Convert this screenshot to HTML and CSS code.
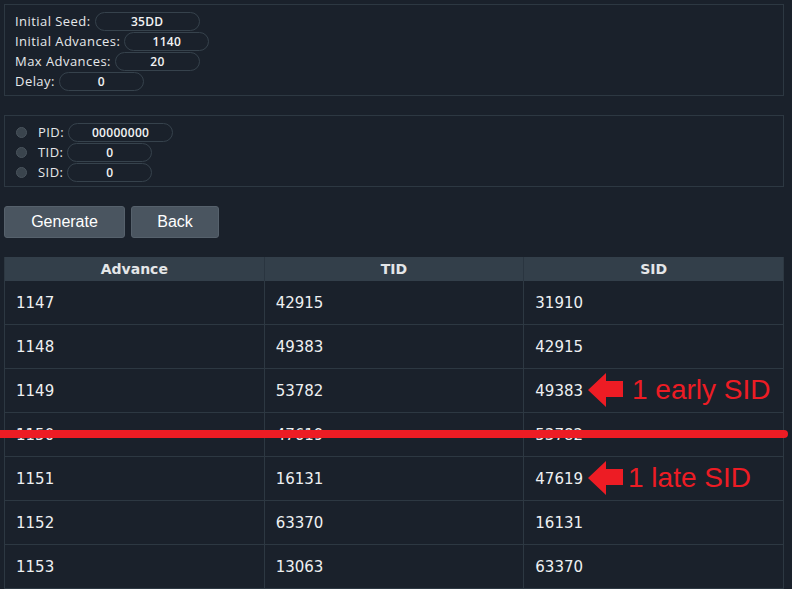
FILE: index.html
```html
<!DOCTYPE html>
<html>
<head>
<meta charset="utf-8">
<link rel="stylesheet" href="styles.css">
</head>
<body>
<div class="page">
  <section class="panel panel-settings">
    <div class="field"><span class="label">Initial Seed:</span><span class="input wide">35DD</span></div>
    <div class="field"><span class="label">Initial Advances:</span><span class="input">1140</span></div>
    <div class="field"><span class="label">Max Advances:</span><span class="input">20</span></div>
    <div class="field"><span class="label">Delay:</span><span class="input">0</span></div>
  </section>
  <section class="panel panel-filter">
    <div class="field"><span class="radio"></span><span class="label">PID:</span><span class="input wide">00000000</span></div>
    <div class="field"><span class="radio"></span><span class="label">TID:</span><span class="input">0</span></div>
    <div class="field"><span class="radio"></span><span class="label">SID:</span><span class="input">0</span></div>
  </section>
  <div class="buttons">
    <button class="btn btn-generate">Generate</button>
    <button class="btn btn-back">Back</button>
  </div>
  <table class="results">
    <thead>
      <tr><th>Advance</th><th>TID</th><th>SID</th></tr>
    </thead>
    <tbody>
      <tr><td>1147</td><td>42915</td><td>31910</td></tr>
      <tr><td>1148</td><td>49383</td><td>42915</td></tr>
      <tr><td>1149</td><td>53782</td><td>49383</td></tr>
      <tr><td>1150</td><td>47619</td><td>53782</td></tr>
      <tr><td>1151</td><td>16131</td><td>47619</td></tr>
      <tr><td>1152</td><td>63370</td><td>16131</td></tr>
      <tr><td>1153</td><td>13063</td><td>63370</td></tr>
    </tbody>
  </table>
</div>
<div class="strike"></div>
<div class="note note-early">
  <svg class="arrow" width="36" height="36" viewBox="0 0 36 36"><polygon points="0,18 18,1 18,9 35,9 35,25 18,25 18,35" fill="#ed1c24"/></svg>
  <span class="note-text">1 early SID</span>
</div>
<div class="note note-late">
  <svg class="arrow" width="36" height="36" viewBox="0 0 36 36"><polygon points="0,18 18,1 18,9 35,9 35,25 18,25 18,35" fill="#ed1c24"/></svg>
  <span class="note-text">1 late SID</span>
</div>
</body>
</html>
```
FILE: styles.css
```css
html, body {
  margin: 0;
  padding: 0;
  background: #1a212b;
  width: 792px;
  height: 589px;
  overflow: hidden;
}
body {
  font-family: "Open Sans", "DejaVu Sans", sans-serif;
  color: #e6e8ea;
  position: relative;
}
.page {
  padding: 4px 8px 0 4px;
  display: flex;
  flex-direction: column;
}
.panel {
  border: 1px solid #2d3842;
  display: flex;
  flex-direction: column;
  box-sizing: border-box;
}
.panel-settings {
  height: 92px;
  padding: 6px 10px 0 10px;
}
.panel-filter {
  margin-top: 19px;
  height: 72px;
  padding: 6px 10px 0 11px;
}
.field {
  display: flex;
  align-items: center;
  height: 20px;
  gap: 4px;
}
.label {
  font-size: 13px;
  letter-spacing: 0.45px;
  color: #e6e8ea;
}
.input {
  box-sizing: border-box;
  width: 85px;
  height: 19px;
  border: 1px solid #36424c;
  border-radius: 10px;
  text-align: center;
  font-size: 12px;
  font-weight: 600;
  letter-spacing: 0.3px;
  line-height: 17px;
  color: #f2f3f4;
}
.input.wide { width: 105px; }
.panel-filter .label { margin-left: 7px; }
.radio {
  width: 11px;
  height: 11px;
  border-radius: 50%;
  background: #3a444d;
  border: 1px solid #4a545d;
  box-sizing: border-box;
}
.buttons {
  margin-top: 19px;
  display: flex;
  gap: 6px;
}
.btn {
  font-family: "Liberation Sans", Arial, sans-serif;
  font-size: 16px;
  color: #ffffff;
  background: #4a5560;
  border: 1px solid #56616c;
  border-radius: 3px;
  height: 32px;
  padding: 0;
}
.btn-generate { width: 121px; }
.btn-back { width: 88px; }
.results {
  margin-top: 19px;
  width: 780px;
  border-collapse: collapse;
  table-layout: fixed;
  border-right: 1px solid #2d3842;
  border-left: 1px solid #2d3842;
  font-family: "DejaVu Sans", sans-serif;
}
.results th {
  background: #333f4a;
  height: 23px;
  padding: 0 0 1px 0;
  font-size: 14px;
  font-weight: 700;
  color: #e4e6e8;
  border-left: 1px solid #2a3540;
}
.results th:first-child { border-left: none; }
.results td {
  height: 43px;
  line-height: 18px;
  padding: 0 0 0 11px;
  font-size: 15px;
  color: #eef0f2;
  border-bottom: 1px solid #2d3842;
  border-left: 1px solid #2d3842;
}
.strike {
  position: absolute;
  left: 0;
  top: 430px;
  width: 788px;
  height: 8px;
  background: #ed1c24;
  border-radius: 0 4px 4px 0;
}
.note {
  position: absolute;
  left: 588px;
  display: flex;
  align-items: center;
  gap: 8px;
  color: #ed1c24;
  font-family: "Liberation Sans", Arial, sans-serif;
  font-size: 28px;
}
.note-early { top: 372px; }
.note-late { top: 460px; gap: 4px; }
.arrow { display: block; }
```
